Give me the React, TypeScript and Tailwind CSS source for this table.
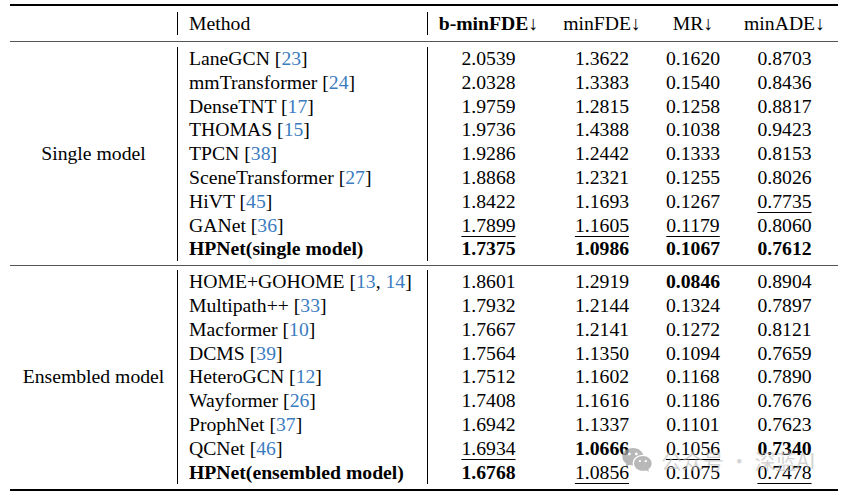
import { RiWechatFill } from 'react-icons/ri'

type Cell = { v: string; b?: boolean; u?: boolean }
type Row = { name: string; cites?: string[]; bold?: boolean; cells: Cell[] }

const c = (v: string, b = false, u = false): Cell => ({ v, b, u })

const single: Row[] = [
  { name: 'LaneGCN', cites: ['23'], cells: [c('2.0539'), c('1.3622'), c('0.1620'), c('0.8703')] },
  { name: 'mmTransformer', cites: ['24'], cells: [c('2.0328'), c('1.3383'), c('0.1540'), c('0.8436')] },
  { name: 'DenseTNT', cites: ['17'], cells: [c('1.9759'), c('1.2815'), c('0.1258'), c('0.8817')] },
  { name: 'THOMAS', cites: ['15'], cells: [c('1.9736'), c('1.4388'), c('0.1038'), c('0.9423')] },
  { name: 'TPCN', cites: ['38'], cells: [c('1.9286'), c('1.2442'), c('0.1333'), c('0.8153')] },
  { name: 'SceneTransformer', cites: ['27'], cells: [c('1.8868'), c('1.2321'), c('0.1255'), c('0.8026')] },
  { name: 'HiVT', cites: ['45'], cells: [c('1.8422'), c('1.1693'), c('0.1267'), c('0.7735', false, true)] },
  { name: 'GANet', cites: ['36'], cells: [c('1.7899', false, true), c('1.1605', false, true), c('0.1179', false, true), c('0.8060')] },
  { name: 'HPNet(single model)', bold: true, cells: [c('1.7375', true), c('1.0986', true), c('0.1067', true), c('0.7612', true)] },
]

const ensembled: Row[] = [
  { name: 'HOME+GOHOME', cites: ['13', '14'], cells: [c('1.8601'), c('1.2919'), c('0.0846', true), c('0.8904')] },
  { name: 'Multipath++', cites: ['33'], cells: [c('1.7932'), c('1.2144'), c('0.1324'), c('0.7897')] },
  { name: 'Macformer', cites: ['10'], cells: [c('1.7667'), c('1.2141'), c('0.1272'), c('0.8121')] },
  { name: 'DCMS', cites: ['39'], cells: [c('1.7564'), c('1.1350'), c('0.1094'), c('0.7659')] },
  { name: 'HeteroGCN', cites: ['12'], cells: [c('1.7512'), c('1.1602'), c('0.1168'), c('0.7890')] },
  { name: 'Wayformer', cites: ['26'], cells: [c('1.7408'), c('1.1616'), c('0.1186'), c('0.7676')] },
  { name: 'ProphNet', cites: ['37'], cells: [c('1.6942'), c('1.1337'), c('0.1101'), c('0.7623')] },
  { name: 'QCNet', cites: ['46'], cells: [c('1.6934', false, true), c('1.0666', true), c('0.1056', false, true), c('0.7340', true)] },
  { name: 'HPNet(ensembled model)', bold: true, cells: [c('1.6768', true), c('1.0856', false, true), c('0.1075'), c('0.7478', false, true)] },
]

const grid = 'grid grid-cols-[167px_250px_122px_106px_76px_107px]'

function Method({ row }: { row: Row }) {
  return (
    <span className={row.bold ? 'font-bold' : ''}>
      {row.name}
      {row.cites && (
        <>
          {' ['}
          {row.cites.map((ct, i) => (
            <span key={ct}>
              {i > 0 && ', '}
              <span className="text-[#3b7cbf]">{ct}</span>
            </span>
          ))}
          {']'}
        </>
      )}
    </span>
  )
}

// LaTeX-style \downarrow
function Down() {
  return <span className="font-normal text-black">↓</span>
}

function Group({ label, rows, top, bottom }: { label: string; rows: Row[]; top: string; bottom: string }) {
  return (
    <div className={`${grid} ${top} ${bottom}`}>
      <div className="row-span-9 flex items-center justify-center">{label}</div>
      {rows.map((r) => (
        <div key={r.name} className="contents">
          <div className="h-[23.8px] leading-[23.8px] border-l border-black pl-[11px] whitespace-nowrap">
            <Method row={r} />
          </div>
          {r.cells.map((cell, i) => (
            <div
              key={i}
              className={`h-[23.8px] leading-[23.8px] text-center ${i === 0 ? 'border-l border-black' : ''}`}
            >
              <span
                className={`${cell.b ? 'font-bold' : ''} ${cell.u ? 'underline decoration-1 underline-offset-[4px]' : ''}`}
              >
                {cell.v}
              </span>
            </div>
          ))}
        </div>
      ))}
    </div>
  )
}

export default function App() {
  return (
    <div className="relative w-[850px] h-[496px] bg-white text-black [font-family:Liberation_Serif] text-[19.7px] overflow-hidden">
      <div className="ml-[10px] w-[828px] pt-[4px]">
        <div className="h-[2px] bg-black" />
        <div className={`${grid} py-[6px]`}>
          <div />
          <div className="h-[23px] leading-[23px] border-l border-black pl-[11px]">Method</div>
          <div className="h-[23px] leading-[23px] border-l border-black text-center font-bold whitespace-nowrap">b-minFDE<Down /></div>
          <div className="h-[23px] leading-[23px] text-center whitespace-nowrap">minFDE<Down /></div>
          <div className="h-[23px] leading-[23px] text-center whitespace-nowrap">MR<Down /></div>
          <div className="h-[23px] leading-[23px] text-center whitespace-nowrap">minADE<Down /></div>
        </div>
        <div className="h-px bg-[#555]" />
        <Group label="Single model" rows={single} top="pt-[5px]" bottom="pb-[4px]" />
        <div className="h-px bg-[#555]" />
        <Group label="Ensembled model" rows={ensembled} top="pt-[4px]" bottom="pb-[5px]" />
        <div className="h-[2px] bg-black" />
      </div>

      {/* watermark */}
      <div className="absolute left-[621px] top-[444px] flex items-center gap-[8px]">
        <RiWechatFill size={32} className="text-[#a0a0a0]/75" />
        <span className="[font-family:Noto_Sans_CJK_SC] text-[21px] leading-none text-[#b8b8b8]/60">公众号 · 深蓝AI</span>
      </div>
    </div>
  )
}
